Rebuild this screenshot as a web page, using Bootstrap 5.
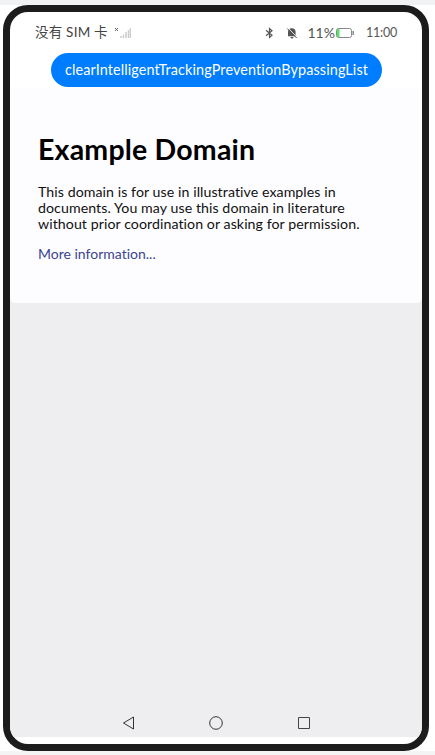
<!DOCTYPE html>
<html lang="en">
<head>
<meta charset="utf-8">
<meta name="viewport" content="width=device-width, initial-scale=1">
<title>Example Domain</title>
<link href="https://cdn.jsdelivr.net/npm/bootstrap@5.3.0/dist/css/bootstrap.min.css" rel="stylesheet">
<style>
body{font-family:Lato,"Noto Sans CJK SC",sans-serif;font-variant-ligatures:none;background:#fff;height:755px;overflow:hidden;border-top:5px solid #f1f2f4;border-bottom:4px solid #f4f4f5}
.device{width:426px;height:746px;margin-left:3px;border:7px solid #1c1c1c;border-radius:25px;overflow:hidden;background:#fff}
.status{height:41px;padding:0 25px;color:#555;font-size:13.5px;line-height:41px}
.sim{letter-spacing:.22px;color:#444}
.bars{margin-left:7px}
.bell{margin-left:12px}
.pct{font-size:14px;margin-left:9px}
.clock{font-size:12.5px;margin-left:11px;letter-spacing:-.2px}
.action{width:331px;height:34px;margin-left:41px;margin-bottom:1px;background:#007dff;font-size:14.4px;letter-spacing:.12px;color:#fff;line-height:34px}
.viewport{background:#eeeef0;height:649px}
.sheet{background:#fdfdff;height:215px;border-radius:0 0 5px 5px;padding:44px 27px 0 28px;color:#111}
.title{font-size:28.500px;letter-spacing:.2px;font-weight:700;line-height:34px;margin:0 0 18px;color:#000}
.copy{font-size:14.2px;letter-spacing:.06px;line-height:16px;margin:0 0 14px}
.more{display:block;font-size:14px;letter-spacing:0;line-height:16px;color:#3c4490}
.navkeys{height:28px;padding:0 111px}
svg{display:block;flex:none}
</style>
</head>
<body>
<main class="device d-flex flex-column">
  <header class="status d-flex align-items-center flex-shrink-0">
    <span class="sim text-nowrap">没有 SIM 卡</span>
    <svg class="bars" width="16" height="14" viewBox="0 0 16 14"><path d="M0 2l3 3M3 2l-3 3" stroke="#666"/><path d="M6 12v-2M8.500 12V8.500M11 12V6M13.500 12V4M15.500 12V2" stroke="#ccc" stroke-width="1.500"/></svg>
    <svg class="ms-auto" width="9" height="12" viewBox="0 0 9 12"><path d="M1 3.300l6 5L4.500 10.500v-9L7 3.700 1 8.700" fill="none" stroke="#555" stroke-width="1.200"/></svg>
    <svg class="bell" width="12" height="12" viewBox="0 0 12 12"><path d="M2 9.300V5a3.800 3.800 0 017.600 0v3l1 1.300zM4.500 10h3a1.500 1.500 0 01-3 0z" fill="#555"/><path d="M2 1l9 9" stroke="#fff" stroke-width=".8"/><path d="M1.200 1.500l9.500 9.500" stroke="#555"/></svg>
    <span class="pct">11%</span>
    <svg width="20" height="12" viewBox="0 0 20 12"><rect x="1.500" y="1.500" width="15" height="9" rx="2" fill="none" stroke="#888"/><path d="M2 2h2.500v8H2z" fill="#55e465"/><path d="M18.200 4v4" stroke="#888" stroke-width="1.500"/></svg>
    <span class="clock">11:00</span>
  </header>
  <button class="action btn rounded-pill border-0 p-0 text-nowrap flex-shrink-0" type="button">clearIntelligentTrackingPreventionBypassingList</button>
  <section class="viewport d-flex flex-column flex-shrink-0">
    <article class="sheet">
      <h1 class="title">Example Domain</h1>
      <p class="copy text-nowrap">This domain is for use in illustrative examples in<br>documents. You may use this domain in literature<br>without prior coordination or asking for permission.</p>
      <a class="more text-decoration-none" href="#">More information...</a>
    </article>
    <nav class="navkeys d-flex align-items-center justify-content-between mt-auto">
      <svg width="14" height="14" viewBox="0 0 14 14"><path d="M12.500 1v12L2.500 7z" fill="none" stroke="#333"/></svg>
      <svg width="14" height="14" viewBox="0 0 14 14"><circle cx="7" cy="7" r="6.300" fill="none" stroke="#333"/></svg>
      <svg width="14" height="14" viewBox="0 0 14 14"><path d="M1.500 1.500h11v11h-11z" fill="none" stroke="#444"/></svg>
    </nav>
  </section>
</main>
</body>
</html>
